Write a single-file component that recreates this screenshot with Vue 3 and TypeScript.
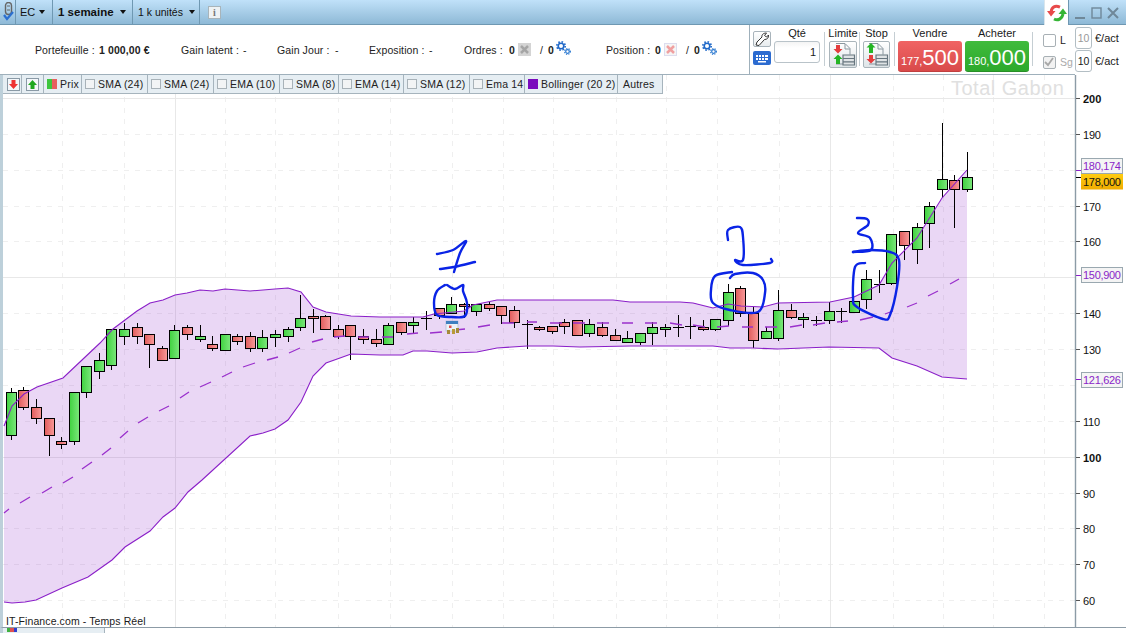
<script setup lang="ts">
type Kind = 'g' | 'r' | 'd'
type Candle = [number, number, number, number, Kind]
type Pt = [number, number]

const raw: Candle[] = [
  [388,392,435,440,'g'],[387,390,407,410,'r'],[399,407,418,424,'r'],[418,418,435,456,'r'],[437,441,444,449,'r'],
  [392,392,441,445,'g'],[366,366,392,398,'g'],[353,360,371,379,'g'],[329,329,365,370,'g'],[323,329,336,345,'g'],
  [323,327,336,344,'r'],[334,334,344,368,'r'],[346,348,360,360,'r'],[325,330,358,358,'g'],[325,327,334,340,'r'],
  [325,336,339,342,'g'],[336,344,348,351,'r'],[334,334,350,350,'g'],[334,336,341,345,'r'],[332,336,348,352,'r'],
  [330,337,348,352,'g'],[330,334,337,347,'g'],[327,329,336,342,'g'],[295,318,327,331,'g'],[309,316,318,333,'r'],
  [315,316,329,330,'r'],[325,329,336,339,'r'],[325,325,336,360,'r'],[329,336,339,344,'r'],[329,339,343,347,'r'],
  [323,325,344,344,'g'],[322,322,332,335,'r'],[317,322,325,333,'g'],[311,318,318,330,'d'],[308,308,315,319,'r'],
  [297,304,313,313,'g'],[303,304,306,318,'r'],[304,304,311,316,'g'],[302,304,308,311,'r'],[306,306,315,324,'r'],
  [306,310,322,328,'r'],[320,324,324,349,'d'],[326,327,329,331,'r'],[326,326,331,334,'r'],[319,322,326,334,'r'],
  [320,320,335,336,'r'],[319,324,333,337,'g'],[322,327,335,337,'r'],[329,335,340,340,'r'],[331,338,342,342,'g'],
  [333,333,342,345,'g'],[322,327,333,345,'g'],[324,327,329,337,'g'],[315,327,327,337,'d'],[317,326,326,339,'d'],
  [320,327,329,331,'r'],[319,319,329,331,'g'],[284,292,320,326,'g'],[286,288,313,317,'r'],[307,313,340,348,'r'],
  [327,331,338,339,'g'],[290,310,338,341,'g'],[304,310,317,319,'r'],[313,317,319,328,'g'],[316,320,320,326,'d'],
  [302,311,320,324,'g'],[308,311,311,323,'d'],[301,301,312,313,'g'],[270,279,299,309,'g'],[270,284,284,293,'d'],
  [234,234,283,285,'g'],[231,231,245,260,'r'],[223,227,249,264,'g'],[202,206,223,248,'g'],[123,179,189,198,'g'],
  [175,180,189,228,'r'],[152,177,189,192,'g']
]

const candles = raw.map((c, i) => {
  const x = Math.floor(11.3 + 12.58 * i) + 0.5
  return { key: i, x, hi: c[0], top: c[1] + 0.5, bot: c[2] + 0.5, lo: c[3], kind: c[4] }
})

const upper: Pt[] = [[4,426],[12,406],[24,394],[37,387],[63,378],[82,360],[100,343],[113,329],[137,311],[150,303],[163,300],[175,295],[187,293],[200,290],[213,291],[225,289],[250,291],[275,289],[288,288],[301,292],[313,307],[326,312],[351,316],[380,317],[423,317],[434,314],[464,311],[473,305],[497,300],[517,300],[613,300],[630,302],[680,302],[693,303],[713,308],[728,304],[741,306],[763,307],[778,303],[830,302],[854,297],[879,285],[892,263],[917,238],[942,198],[967,170]]
const lower: Pt[] = [[967,379],[942,377],[917,366],[892,358],[879,348],[829,347],[778,349],[753,348],[730,348],[713,346],[673,346],[630,346],[580,347],[553,346],[527,346],[497,348],[477,352],[452,353],[427,351],[413,351],[403,355],[380,355],[351,354],[340,358],[326,363],[313,376],[301,402],[288,420],[275,429],[263,433],[250,436],[202,480],[188,492],[175,508],[163,517],[150,531],[125,547],[112,560],[88,577],[62,588],[36,600],[25,602],[12,603],[4,602]]

const pts = (a: Pt[]) => a.map(p => p.join(',')).join(' ')
const upperLine = pts(upper)
const lowerLine = pts(lower)
const bandFill = pts([...upper, ...lower])

const dashes: [number, number, number, number][] = [
  [4,513,9,509],[20,503,30,497],[42,493,52,487],[63,483,73,477],[82,469,92,462],[102,455,111,448],[120,438,128,431],[138,423,148,417],[159,411,169,406],[180,398,189,392],[200,387,211,382],[222,377,232,372],[243,367,255,363],[267,360,278,357],[289,353,300,348],[312,342,323,339],[334,337,345,336],[358,337,369,337],
  [382,337,393,337],[407,334,418,333],[430,333,442,332],[455,330,465,329],[478,327,490,325],[502,323,514,323],[527,322,537,322],[550,323,562,323],[573,323,585,323],[597,323,609,323],[622,323,633,323],[645,323,657,323],[670,323,682,325],[693,325,705,327],[717,327,729,326],[742,327,753,327],[765,327,777,327],[790,327,802,325],[813,325,825,323],[837,322,848,321],[860,320,873,317],[885,314,893,311],[907,307,917,303],[928,296,938,291],[950,284,959,279]
]
const dashPath = dashes.map(d => `M${d[0]} ${d[1]}L${d[2]} ${d[3]}`).join('')

const vGrid = [62,124,225,275,338,390,452,503,553,616,666,717,779,893,943,993,1044]
const vSolid = [175,830]
const hGrid = [134,170,206,241,313,349,385,421,493,528,564,600]
const hSolid = [98,277,457]

const axis: { y: number; t: string; b?: boolean }[] = [
  { y: 98, t: '200', b: true },{ y: 134, t: '190' },{ y: 206, t: '170' },{ y: 241, t: '160' },{ y: 313, t: '140' },{ y: 349, t: '130' },{ y: 421, t: '110' },{ y: 457, t: '100', b: true },{ y: 493, t: '90' },{ y: 528, t: '80' },{ y: 564, t: '70' },{ y: 600, t: '60' }
]
const ticks = [98,134,206,241,313,349,421,457,493,528,564,600]
const boxes = [
  { y: 158, t: '180,174', tick: 170 },
  { y: 267, t: '150,900', tick: 275 },
  { y: 372, t: '121,626', tick: 379 }
]

function smooth(p: Pt[]): string {
  let d = `M${p[0][0]} ${p[0][1]}`
  for (let i = 0; i < p.length - 1; i++) {
    const a = p[Math.max(i - 1, 0)], b = p[i], c = p[i + 1], e = p[Math.min(i + 2, p.length - 1)]
    d += `C${b[0] + (c[0] - a[0]) / 6} ${b[1] + (c[1] - a[1]) / 6} ${c[0] - (e[0] - b[0]) / 6} ${c[1] - (e[1] - b[1]) / 6} ${c[0]} ${c[1]}`
  }
  return d
}
const inks: string[] = [
  [[437,254],[453,250],[466,241],[460,253],[454,272]],
  [[440,269],[454,267],[475,262]],
  [[445,285],[437,291],[434,303],[437,315],[452,317],[465,316],[467,303],[463,291],[463,285],[455,289],[447,285]],
  [[728,240],[728,230],[740,227],[743,237],[743,260],[735,260],[743,265],[770,263],[771,259]],
  [[732,272],[715,276],[711,290],[713,303],[730,310],[758,312],[765,293],[763,280],[753,273],[735,274],[730,278]],
  [[857,218],[867,219],[868,225],[858,233],[870,238],[871,250],[853,252]],
  [[865,263],[855,267],[853,297],[857,307],[883,319],[890,315],[897,287],[899,260],[890,252],[870,250],[853,252]]
].map(a => smooth(a as Pt[]))

const legends = [
  { label: 'SMA (24)', cls: 'w66' },{ label: 'SMA (24)', cls: 'w66' },{ label: 'EMA (10)', cls: 'w66' },{ label: 'SMA (8)', cls: 'w59' },{ label: 'EMA (14)', cls: 'w65' },{ label: 'SMA (12)', cls: 'w66' },{ label: 'Ema 14', cls: 'w55' }
]
</script>

<template>
  <div class="app">
    <header class="titlebar">
      <div class="tb-cell pin">
        <svg width="11" height="20" viewBox="0 0 11 20">
          <rect x="2.5" y="0.5" width="6" height="12" rx="3" fill="none" stroke="#666" stroke-width="1.4" />
          <path d="M4 4h3M4 8h3" stroke="#666" />
          <path d="M1 13l3 4 6-7" fill="none" stroke="#2b6fd0" stroke-width="2.200" />
        </svg>
      </div>
      <div class="tb-cell ec">EC<i class="caret" /></div>
      <div class="tb-cell week">1 semaine<i class="caret" /></div>
      <div class="tb-cell units">1 k unités<i class="caret" /></div>
      <div class="info">i</div>
      <div class="tab-space" />
      <div class="sync">
        <svg width="20" height="18" viewBox="0 0 20 18">
          <path d="M13 3.200C8 1 4.800 3 4.200 7.500" fill="none" stroke="#e84a4a" stroke-width="3" />
          <path d="M0 7l4 5.500 4.500-5.500z" fill="#e84a4a" />
          <path d="M7 15c4 2 8 0 9-5" fill="none" stroke="#35b535" stroke-width="3" />
          <path d="M11.500 10l4.500-5.500 4 5.500z" fill="#35b535" />
        </svg>
      </div>
      <div class="winctl">
        <svg width="48" height="12" viewBox="0 0 48 12" fill="none" stroke="#6f8899" stroke-width="2">
          <path d="M0 11h10" />
          <rect x="17" y="1" width="9" height="10" stroke-width="1.400" />
          <path d="M33 1l10 10M43 1l-10 10" />
        </svg>
      </div>
    </header>

    <section class="toolbar">
      <div class="stats">
        <div class="stat c1"><span class="lab l1">Portefeuille :</span><b>1 000,00 €</b></div>
        <div class="stat c2"><span class="lab l2">Gain latent :</span><span>-</span></div>
        <div class="stat c3"><span class="lab l3">Gain Jour :</span><span>-</span></div>
        <div class="stat c4"><span class="lab l4">Exposition :</span><span>-</span></div>
        <div class="stat c5">
          <span class="lab l5">Ordres :</span><b class="num">0</b>
          <svg class="cross" width="13" height="13" viewBox="0 0 13 13"><rect width="13" height="13" fill="#d4d4d4" /><path d="M3 3l7 7M10 3l-7 7" stroke="#a5a5a5" stroke-width="2.500" /></svg>
          <span class="slash">/</span><b class="num">0</b>
          <svg class="gears" width="15" height="14" viewBox="0 0 15 14"><circle cx="5" cy="5" r="2.800" fill="none" stroke="#1f68c8" stroke-width="1.600" /><circle cx="5" cy="5" r="4.200" fill="none" stroke="#1f68c8" stroke-width="1.600" stroke-dasharray="1.600 1.700" /><circle cx="11.500" cy="10.500" r="1.800" fill="none" stroke="#2a78d0" stroke-width="1.200" /><circle cx="11.500" cy="10.500" r="2.900" fill="none" stroke="#2a78d0" stroke-width="1.100" stroke-dasharray="1.200 1.200" /></svg>
        </div>
        <div class="stat c6">
          <span class="lab l6">Position :</span><b class="num">0</b>
          <svg class="cross" width="13" height="13" viewBox="0 0 13 13"><rect x=".5" y=".5" width="12" height="12" fill="#f5f5f5" stroke="#dde" /><path d="M3 3l7 7M10 3l-7 7" stroke="#f0a0a0" stroke-width="2.500" /></svg>
          <span class="slash">/</span><b class="num">0</b>
          <svg class="gears" width="15" height="14" viewBox="0 0 15 14"><circle cx="5" cy="5" r="2.800" fill="none" stroke="#1f68c8" stroke-width="1.600" /><circle cx="5" cy="5" r="4.200" fill="none" stroke="#1f68c8" stroke-width="1.600" stroke-dasharray="1.600 1.700" /><circle cx="11.500" cy="10.500" r="1.800" fill="none" stroke="#2a78d0" stroke-width="1.200" /><circle cx="11.500" cy="10.500" r="2.900" fill="none" stroke="#2a78d0" stroke-width="1.100" stroke-dasharray="1.200 1.200" /></svg>
        </div>
      </div>

      <div class="orderpanel">
        <div class="tools">
          <button class="wrench">
            <svg width="14" height="14" viewBox="0 0 14 14"><path d="M1 13l1-3 5-5c-.5-2 1-4 4.500-4l-2 2.500 2 1.500 2-2c.3 3-1.500 4.500-4 4.500l-5.500 6z" fill="#fff" stroke="#333" stroke-width="1" /></svg>
          </button>
          <div class="keyboard">
            <svg width="14" height="9" viewBox="0 0 14 9" fill="#fff"><path d="M1 1h2v2H1zM4 1h2v2H4zM7 1h2v2H7zM10 1h3v2h-3zM1 4h2v2H1zM4 4h2v2H4zM7 4h2v2H7zM10 4h3v2h-3zM3 7h8v1.500H3z" /></svg>
          </div>
        </div>
        <div class="qty"><div class="cap">Qté</div><div class="qtybox">1</div></div>
        <i class="sep s1" />
        <div class="mini m1">
          <div class="cap">Limite</div>
          <button class="ordbtn">
            <svg width="25" height="25" viewBox="0 0 25 25">
              <path d="M5 1.500h9l5 5v6M5 22h7" fill="none" stroke="#8b98a0" />
              <path d="M14 2v5h5" fill="none" stroke="#8b98a0" />
              <path d="M5 3v4H2.500L7 11.500 11.500 7H9V3z" fill="#e43d3d" />
              <path d="M7 12.500L2.500 17H5v5h4v-5h2.500z" fill="#25b525" />
              <path d="M12 13h11.500v10H12zM12 16.500h11.500M12 19.800h11.500" fill="#dfe3e5" stroke="#67767f" stroke-width="1.200" />
            </svg>
          </button>
        </div>
        <i class="sep s2" />
        <div class="mini m2">
          <div class="cap">Stop</div>
          <button class="ordbtn">
            <svg width="25" height="25" viewBox="0 0 25 25">
              <path d="M5 1.500h9l5 5v6M5 22h7" fill="none" stroke="#8b98a0" />
              <path d="M14 2v5h5" fill="none" stroke="#8b98a0" />
              <path d="M7 1L2.500 5.500H5V11h4V5.500h2.500z" fill="#25b525" />
              <path d="M5 13v4H2.500L7 21.500 11.500 17H9v-4z" fill="#e43d3d" />
              <path d="M12 13h11.500v10H12zM12 16.500h11.500M12 19.800h11.500" fill="#dfe3e5" stroke="#67767f" stroke-width="1.200" />
            </svg>
          </button>
        </div>
        <i class="sep s3" />
        <div class="deal d1">
          <div class="cap">Vendre</div>
          <div class="price sell"><small>177,</small><span>500</span></div>
        </div>
        <div class="deal d2">
          <div class="cap">Acheter</div>
          <div class="price buy"><small>180,</small><span>000</span></div>
        </div>
        <i class="sep s4" />
        <div class="checks">
          <div class="chk"><i class="box" /><span class="L">L</span></div>
          <div class="chk sg">
            <i class="box off"><svg width="10" height="10" viewBox="0 0 10 10"><path d="M1 5l3 3 5-7" fill="none" stroke="#a8a8a8" stroke-width="1.800" /></svg></i>
            <span>Sg</span>
          </div>
        </div>
      </div>

      <div class="rates">
        <div class="rate"><div class="ratebox dim">10</div><span>€/act</span></div>
        <div class="rate"><div class="ratebox">10</div><span>€/act</span></div>
      </div>
    </section>

    <main class="chartwrap">
      <nav class="legend">
        <div class="lg lg0"><svg width="13" height="13" viewBox="0 0 13 13"><rect x=".5" y=".5" width="12" height="12" fill="#f4f7fa" stroke="#8a9aa6" /><path d="M4.500 2v4H2l4.500 5L11 6H8.500V2z" fill="#e33" /></svg></div>
        <div class="lg lg1"><svg width="13" height="13" viewBox="0 0 13 13"><rect x=".5" y=".5" width="12" height="12" fill="#f4f7fa" stroke="#8a9aa6" /><path d="M6.500 2L2 7h2.500v4h4V7H11z" fill="#20a820" /></svg></div>
        <div class="lg lg2"><i class="prix" /><span>Prix</span></div>
        <div v-for="(l, i) in legends" :key="i" class="lg" :class="l.cls"><i class="cb" /><span>{{ l.label }}</span></div>
        <div class="lg w93"><i class="swatch" /><span>Bollinger (20 2)</span></div>
        <div class="lg w44 last"><span>Autres</span></div>
      </nav>

      <svg class="chart" width="1123" height="552" viewBox="3 75 1123 552">
        <defs>
          <linearGradient id="gG"><stop offset="0" stop-color="#3fd23f" /><stop offset="1" stop-color="#7ce77c" /></linearGradient>
          <linearGradient id="gR"><stop offset="0" stop-color="#e05c5c" /><stop offset="1" stop-color="#f99a9a" /></linearGradient>
          <linearGradient id="gY" x2="0" y2="1"><stop offset="0" stop-color="#ffcc10" /><stop offset="1" stop-color="#f0ac00" /></linearGradient>
        </defs>

        <g stroke="#efefef" stroke-dasharray="5 6">
          <line v-for="x in vGrid" :key="'v' + x" :x1="x + .5" :x2="x + .5" y1="75" y2="627" />
          <line v-for="y in hGrid" :key="'h' + y" x1="3" x2="1075" :y1="y + .5" :y2="y + .5" />
        </g>
        <g stroke="#e8e8e8">
          <line v-for="x in vSolid" :key="'vs' + x" :x1="x + .5" :x2="x + .5" y1="75" y2="627" />
          <line v-for="y in hSolid" :key="'hs' + y" x1="3" x2="1075" :y1="y + .5" :y2="y + .5" />
        </g>

        <text class="watermark" x="951" y="95">Total Gabon</text>

        <polygon :points="bandFill" fill="#8a1fc8" fill-opacity=".18" />

        <g v-for="c in candles" :key="c.key">
          <line :x1="c.x" :x2="c.x" :y1="c.hi" :y2="c.lo" stroke="#000" />
          <line v-if="c.kind === 'd'" :x1="c.x - 5.500" :x2="c.x + 5.500" :y1="c.top" :y2="c.top" stroke="#000" />
          <rect v-else :x="c.x - 5" :y="c.top" width="10" :height="c.bot - c.top" :fill="c.kind === 'g' ? 'url(#gG)' : 'url(#gR)'" stroke="#000" />
        </g>

        <polyline :points="upperLine" fill="none" stroke="#8a1fc8" stroke-width="1.100" />
        <polyline :points="lowerLine" fill="none" stroke="#8a1fc8" stroke-width="1.100" />
        <path :d="dashPath" fill="none" stroke="#9a30cc" stroke-width="1.300" />

        <g transform="translate(446 321)">
          <rect width="12" height="10" fill="#eef2f7" stroke="#9db4cc" stroke-width=".6" />
          <rect width="12" height="3" fill="#3f7fc0" />
          <rect x="3" y="4.500" width="2.500" height="2.500" fill="#e05050" />
          <rect x="1" y="9" width="3" height="4" fill="#a58a3a" />
          <rect x="6" y="8" width="3" height="5" fill="#b89a3a" />
          <rect x="10" y="7" width="3" height="5" fill="#a58a3a" />
        </g>

        <path v-for="(d, i) in inks" :key="'ink' + i" :d="d" fill="none" stroke="#0a24e6" stroke-width="2.400" stroke-linecap="round" stroke-linejoin="round" />

        <text class="source" x="6" y="625">IT-Finance.com - Temps Réel</text>

        <line x1="1075.500" x2="1075.500" y1="75" y2="627" stroke="#8c9ba6" stroke-width="1.400" />
        <line v-for="y in ticks" :key="'t' + y" x1="1076" x2="1080" :y1="y + .5" :y2="y + .5" stroke="#555" />
        <text v-for="a in axis" :key="a.t" class="axis" :class="{ strong: a.b }" x="1083" :y="a.y + 4.500">{{ a.t }}</text>

        <g v-for="b in boxes" :key="b.t">
          <line x1="1076" x2="1081" :y1="b.tick + .5" :y2="b.tick + .5" stroke="#8a1fc8" />
          <rect x="1081.500" :y="b.y + .5" width="41" height="15" fill="#f4f4f4" stroke="#9aa8b0" />
          <text class="boxval" x="1083" :y="b.y + 12">{{ b.t }}</text>
        </g>
        <line x1="1076" x2="1081" y1="177.500" y2="177.500" stroke="#000" />
        <rect x="1081" y="174" width="42" height="15.500" fill="url(#gY)" />
        <text class="boxval black" x="1083" y="186">178,000</text>
      </svg>
    </main>

    <footer class="statusbar">
      <div class="st-tab"><i class="st-icon" /></div>
    </footer>
  </div>
</template>

<style scoped>
.app {
  width: 1126px;
  height: 633px;
  overflow: hidden;
  background: #fff;
  color: #1a1a1a;
  font-family: "Liberation Sans", Arial, sans-serif;
  font-size: 11px;
  display: flex;
  flex-direction: column;
}
.titlebar {
  height: 25px;
  flex: none;
  display: flex;
  align-items: stretch;
  background: linear-gradient(#c0e1f9, #8eb9d6);
  border-bottom: 1px solid #6f98b2;
  box-sizing: border-box;
}
.tb-cell {
  display: flex;
  align-items: center;
  border-right: 1px solid #6f98b2;
  color: #111;
  box-sizing: border-box;
  white-space: nowrap;
}
.pin { width: 16px; padding-left: 3px; }
.ec { width: 37px; padding-left: 4px; font-size: 11px; }
.week { width: 80px; padding-left: 5px; font-weight: 700; font-size: 11.500px; }
.units { width: 67px; padding-left: 5px; font-size: 10.500px; }
.caret {
  margin-left: 6px;
  border-left: 3.500px solid transparent;
  border-right: 3.500px solid transparent;
  border-top: 4px solid #111;
}
.ec .caret { margin-left: 4px; }
.info {
  width: 11px;
  height: 11px;
  margin: 6px 0 0 8px;
  background: #eef2f4;
  border: 1px solid #a8b4ba;
  color: #777;
  font: 700 10px/11px "Liberation Serif", serif;
  text-align: center;
}
.tab-space { flex: 1; }
.sync {
  width: 24px;
  margin-bottom: -1px;
  background: #fff;
  display: flex;
  align-items: center;
  justify-content: center;
  padding-top: 1px;
  box-sizing: border-box;
  border-left: 1px solid #d9e5ec;
}
.winctl {
  width: 58px;
  border-left: 1px solid #6f98b2;
  display: flex;
  align-items: center;
  padding-left: 6px;
  box-sizing: border-box;
  padding-top: 1px;
}
.toolbar { height: 50px; flex: none; display: flex; }
.stats {
  width: 749px;
  flex: none;
  box-sizing: border-box;
  padding-left: 35px;
  display: flex;
  align-items: center;
  border-bottom: 1px solid #9fb0bb;
  font-size: 10.500px;
  color: #222;
}
.stat { display: flex; align-items: center; flex: none; letter-spacing: .1px; }
.lab { display: block; flex: none; }
.c1 { width: 146px; } .l1 { width: 64px; }
.c2 { width: 96px; } .l2 { width: 62px; }
.c3 { width: 92px; } .l3 { width: 58px; }
.c4 { width: 95px; } .l4 { width: 60px; }
.c5 { width: 142px; } .l5 { width: 45px; }
.c6 { width: 120px; } .l6 { width: 49px; }
.num { width: 8px; }
.cross { margin: 0 9px 0 1px; }
.slash { width: 8px; }
.gears { margin-top: -3px; }
.orderpanel {
  width: 326px;
  flex: none;
  box-sizing: border-box;
  border-left: 1px solid #9fb0bb;
  border-bottom: 1px solid #9fb0bb;
  display: flex;
  align-items: flex-start;
  padding-left: 3px;
}
.tools { width: 18px; padding-top: 6px; display: flex; flex-direction: column; gap: 4px; flex: none; }
.wrench {
  width: 18px;
  height: 16px;
  padding: 0;
  border: 1px solid #a9b4bb;
  border-radius: 2px;
  background: linear-gradient(#fff, #e8ecee);
  display: flex;
  align-items: center;
  justify-content: center;
}
.keyboard {
  width: 18px;
  height: 14px;
  border-radius: 2px;
  background: #2c6bd0;
  display: flex;
  align-items: center;
  justify-content: center;
}
.cap { height: 16px; line-height: 16px; text-align: center; font-size: 11px; white-space: nowrap; }
.qty { width: 46px; margin-left: 3px; flex: none; }
.qtybox {
  height: 22px;
  box-sizing: border-box;
  border: 1px solid #b9c3c9;
  border-radius: 3px;
  text-align: right;
  font-size: 11px;
  line-height: 21px;
  padding-right: 3px;
  background: linear-gradient(#f4f4f4, #fff 30%);
}
.sep { width: 1px; height: 34px; margin-top: 7px; background: #c5ced3; flex: none; }
.s1 { margin-left: 4px; }
.s2 { margin-left: 2px; }
.s3 { margin-left: 4px; }
.s4 { margin-left: 3px; }
.mini { flex: none; }
.m1 { width: 28px; margin-left: 4px; }
.m2 { width: 27px; margin-left: 3px; }
.mini .cap { margin: 0 -3px; }
.ordbtn {
  width: 100%;
  height: 27px;
  padding: 0;
  display: flex;
  align-items: center;
  justify-content: center;
  border: 1px solid #aab5bb;
  border-radius: 2px;
  background: linear-gradient(#fff, #dfe5e8);
  overflow: hidden;
}
.deal { width: 64px; flex: none; margin-left: 3px; }
.price {
  height: 31px;
  border-radius: 3px;
  color: #fff;
  display: flex;
  align-items: baseline;
  justify-content: center;
  line-height: 30px;
  box-sizing: border-box;
  padding-top: 2px;
}
.price small { font-size: 11px; }
.price span { font-size: 22px; }
.sell { background: linear-gradient(#f06464, #d94a4a); border-bottom: 1px solid #c04040; }
.buy { background: linear-gradient(#40bb3c, #2da92c); border-bottom: 1px solid #288f28; }
.checks { width: 32px; margin-left: 10px; padding-top: 9px; flex: none; display: flex; flex-direction: column; gap: 10px; }
.chk { display: flex; align-items: center; gap: 4px; height: 12px; font-size: 10.500px; }
.L { color: #222; }
.box { width: 11px; height: 11px; border: 1px solid #a8b0b5; border-radius: 2px; display: block; flex: none; }
.box.off { background: #f2f2f2; }
.box svg { display: block; }
.sg { color: #a9a9a9; }
.rates { flex: 1; padding-top: 2px; display: flex; flex-direction: column; gap: 1px; }
.rate { display: flex; align-items: center; gap: 3px; height: 22px; font-size: 11px; white-space: nowrap; }
.ratebox {
  width: 17px;
  height: 22px;
  box-sizing: border-box;
  border: 1px solid #b3bec4;
  border-radius: 3px;
  text-align: center;
  line-height: 20px;
  font-size: 10.500px;
}
.dim { color: #999; }
.chartwrap {
  flex: none;
  height: 552px;
  border-left: 3px solid #bdd0da;
  position: relative;
}
.chart { display: block; }
.legend {
  position: absolute;
  left: 0;
  top: 0;
  height: 18px;
  display: flex;
  background: #e6eef3;
  border-bottom: 1px solid #a6b4bd;
  font-size: 10.500px;
  letter-spacing: .2px;
  color: #222;
}
.lg {
  display: flex;
  align-items: center;
  flex: none;
  box-sizing: border-box;
  border-right: 1px solid #a6b4bd;
  padding-left: 3px;
  white-space: nowrap;
}
.lg0 { width: 19px; padding-left: 4px; }
.lg1 { width: 22px; padding-left: 4px; }
.lg2 { width: 38px; }
.w66 { width: 66px; } .w59 { width: 59px; } .w65 { width: 65px; } .w55 { width: 55px; } .w93 { width: 93px; } .w44 { width: 44.500px; padding-left: 5px; }
.prix { width: 10px; height: 10px; margin-right: 3px; background: linear-gradient(90deg, #3fc63f 50%, #e86060 50%); }
.cb { width: 10px; height: 10px; box-sizing: border-box; margin-right: 3px; border: 1px solid #a8b2b8; background: #f2f4f5; }
.swatch { width: 10px; height: 10px; margin-right: 3px; background: #7a0bbd; }
.statusbar { flex: 1; border-left: 3px solid #bdd0da; border-top: 1px solid #8c9ba6; display: flex; }
.st-tab { width: 97px; background: #e6eef3; border-right: 1px solid #a6b4bd; padding-left: 4px; }
.st-icon { display: block; width: 10px; height: 4px; background: linear-gradient(90deg, #40b040 33%, #e05050 33%, #e05050 66%, #3040d0 66%); }
.watermark { font-size: 20px; fill: #e0e0e0; letter-spacing: .5px; }
.source { font-size: 10.500px; fill: #1a1a1a; letter-spacing: .1px; }
.axis { font-size: 11px; fill: #111; letter-spacing: -.2px; }
.strong { font-weight: 700; letter-spacing: 0; }
.boxval { font-size: 11px; fill: #8a1fc8; letter-spacing: -.3px; }
.black { fill: #111; }
</style>
